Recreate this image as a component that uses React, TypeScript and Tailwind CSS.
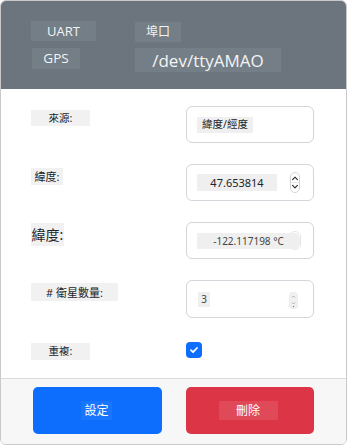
import React from "react";

const cjk = { fontFamily: '"Noto Sans", "Noto Sans CJK TC", sans-serif' };
const hdr = { fontFamily: '"Open Sans", "Noto Sans CJK TC", sans-serif' };

function Spinner() {
  return (
    <svg width="10" height="21" viewBox="0 0 10 21" className="block">
      <rect x="0.5" y="0.5" width="9" height="20" rx="4.5" fill="#fff" stroke="#d4d4d4" />
      <path d="M2.6 7.6 L5 5.2 L7.4 7.6" fill="none" stroke="#333" strokeWidth="1.2" strokeLinecap="round" strokeLinejoin="round" />
      <path d="M2.6 13.4 L5 15.8 L7.4 13.4" fill="none" stroke="#333" strokeWidth="1.2" strokeLinecap="round" strokeLinejoin="round" />
      <line x1="1.5" y1="10.5" x2="8.5" y2="10.5" stroke="#e2e2e2" strokeWidth="0.8" />
    </svg>
  );
}

function SmallSpinner() {
  return (
    <svg width="9" height="17" viewBox="0 0 9 17" className="block">
      <rect x="0.3" y="0.3" width="8.4" height="16.4" rx="4" fill="#f1f1f1" stroke="#e4e4e4" strokeWidth="0.6" />
      <path d="M3 5.5 L4.5 4 L6 5.5" fill="none" stroke="#999" strokeWidth="0.8" />
      <path d="M3 10.5 L4.5 12 L6 10.5" fill="none" stroke="#999" strokeWidth="0.8" />
      <circle cx="4.5" cy="14.6" r="0.7" fill="#666" />
    </svg>
  );
}

export default function App() {
  return (
    <div className="w-[348px] h-[446px] bg-white">
      <div className="w-[347px] h-[445px] border border-[#c9c9c9] rounded-[6px] overflow-hidden flex flex-col">
        {/* Header */}
        <div className="h-[88px] bg-[#6c757d] pt-[20px] pl-[30px] text-[#f3f4f5]" style={hdr}>
          <div className="grid grid-cols-[104px_auto] gap-y-[6px] items-start">
            <div className="w-[65px] h-[20px] bg-[#737e86] flex items-center justify-center text-[13px] leading-none">UART</div>
            <div className="w-[46px] h-[20px] mt-[1px] bg-[#737e86] flex items-center justify-center text-[12px] leading-none">埠口</div>
            <div className="w-[48px] h-[21px] ml-[1px] bg-[#737e86] flex items-center justify-center text-[13.5px] leading-none">GPS</div>
            <div className="w-[146px] h-[24px] bg-[#737e86] flex items-center justify-center text-[17px] leading-none">/dev/ttyAMAO</div>
          </div>
        </div>

        {/* Body */}
        <div className="h-[289px] bg-white pt-[17px] pl-[30px] text-[#212529]" style={cjk}>
          {/* Row 1 */}
          <div className="grid grid-cols-[155px_128px] items-start">
            <div className="mt-[4px] w-[59px] h-[16px] bg-[#f1f1f1] flex items-center justify-center text-[10.5px] leading-none">來源:</div>
            <div className="h-[37px] border border-[#d3d6da] rounded-[6px] flex items-center pl-[10px]">
              <div className="h-[16px] px-[5px] bg-[#efefef] flex items-center text-[10.5px] leading-none">緯度/經度</div>
            </div>
          </div>
          {/* Row 2 */}
          <div className="mt-[21px] grid grid-cols-[155px_128px] items-start">
            <div className="mt-[4px] w-[32px] h-[17px] bg-[#f1f1f1] flex items-center justify-center text-[11px] leading-none">緯度:</div>
            <div className="h-[37px] border border-[#d3d6da] rounded-[6px] flex items-center pl-[10px]">
              <div className="w-[80px] h-[17px] bg-[#efefef] flex items-center justify-center text-[11px] leading-none">47.653814</div>
              <div className="ml-[13px]">
                <Spinner />
              </div>
            </div>
          </div>
          {/* Row 3 */}
          <div className="mt-[21px] grid grid-cols-[155px_128px] items-start">
            <div className="mt-[1px] w-[33px] h-[23px] bg-[#f1f1f1] flex items-center justify-center text-[14px] leading-none">緯度:</div>
            <div className="h-[37px] border border-[#d3d6da] rounded-[6px] flex items-center pl-[10px]">
              <div className="relative">
                <div className="absolute right-[-1px] top-[-2px] w-[12px] h-[19px] rounded-full border border-[#e6e6e6] bg-white" />
                <div className="relative w-[103px] h-[16px] bg-[#efefef] rounded-r-[6px] flex items-center justify-center text-[10px] leading-none text-[#444]">-122.117198 °C</div>
              </div>
            </div>
          </div>
          {/* Row 4 */}
          <div className="mt-[21px] grid grid-cols-[155px_128px] items-start">
            <div className="mt-[3px] w-[87px] h-[18px] bg-[#f1f1f1] flex items-center justify-center text-[11px] leading-none">
              # 衛星數量:
            </div>
            <div className="h-[38px] border border-[#d3d6da] rounded-[6px] flex items-center pl-[11px]">
              <div className="w-[12px] h-[15px] bg-[#efefef] flex items-center justify-center text-[10px] leading-none text-[#444]">3</div>
              <div className="ml-[79px] mt-[2px]">
                <SmallSpinner />
              </div>
            </div>
          </div>
          {/* Row 5 */}
          <div className="mt-[21px] grid grid-cols-[155px_128px] items-start">
            <div className="mt-[4px] w-[59px] h-[17px] bg-[#f1f1f1] flex items-center justify-center text-[10.5px] leading-none">重複:</div>
            <div className="mt-[3px] w-[16px] h-[16px] rounded-[4px] bg-[#0d6efd] flex items-center justify-center">
              <svg width="10" height="10" viewBox="0 0 10 10">
                <path d="M2 5.2 L4.1 7.2 L8 3" fill="none" stroke="#fff" strokeWidth="1.8" strokeLinecap="round" strokeLinejoin="round" />
              </svg>
            </div>
          </div>
        </div>

        {/* Footer */}
        <div className="flex-1 bg-[#f7f7f7] border-t border-[#dadada] pt-[8px] pl-[32px] flex gap-[24px]" style={cjk}>
          <div className="w-[129px] h-[47px] rounded-[5px] bg-[#0d6efd] flex items-center justify-center">
            <div className="w-[31px] h-[19px] ml-[-2px] bg-[#1a75fd] flex items-center justify-center text-[12px] leading-none text-white">設定</div>
          </div>
          <div className="w-[128px] h-[47px] rounded-[5px] bg-[#dc3545] flex items-center justify-center">
            <div className="w-[59px] h-[19px] ml-[-4px] bg-[#e04a58] flex items-center justify-center text-[12px] leading-none text-white">刪除</div>
          </div>
        </div>
      </div>
    </div>
  );
}
